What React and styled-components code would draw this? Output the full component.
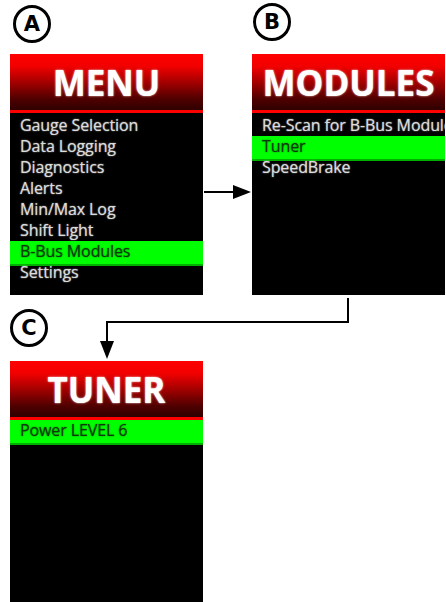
import React from "react";
import styled, { createGlobalStyle } from "styled-components";

const Global = createGlobalStyle`
  html, body { margin: 0; padding: 0; background: #ffffff; }
  body { width: 446px; height: 602px; overflow: hidden; }
`;

const Page = styled.div`
  display: grid;
  grid-template-columns: 193px 49px 193px;
  grid-template-rows: 54px 241px 66px 241px;
  padding-left: 10px;
  width: 446px;
  height: 602px;
  box-sizing: border-box;
`;

const Badge = styled.div`
  width: 38px;
  height: 38px;
  box-sizing: border-box;
  border: 3px solid #000;
  border-radius: 50%;
  display: flex;
  align-items: center;
  justify-content: center;
  font-family: "DejaVu Sans", sans-serif;
  font-weight: 700;
  font-size: 21px;
  color: #000;
  margin-top: ${(p) => p.$top}px;
  margin-left: ${(p) => p.$left}px;
`;

const Screen = styled.div`
  background: #000;
  display: flex;
  flex-direction: column;
  overflow: hidden;
  width: 193px;
  height: 241px;
`;

const Header = styled.div`
  height: 56px;
  border-bottom: 3px solid #ff0000;
  background: linear-gradient(
    to bottom,
    #ff0000 0%,
    #f20000 22%,
    #a00000 52%,
    #500000 80%,
    #300000 100%
  );
  display: flex;
  align-items: center;
  justify-content: center;
  flex-shrink: 0;
`;

const Title = styled.div`
  font-family: "Open Sans", sans-serif;
  font-weight: 700;
  font-size: 35px;
  line-height: 1;
  color: #ffffff;
  white-space: nowrap;
  text-shadow: 0 0 1.5px rgba(255, 255, 255, 0.9), 0 0 3px rgba(255, 255, 255, 0.3);
  padding-top: 1px;
`;

const List = styled.div`
  display: flex;
  flex-direction: column;
  padding-top: ${(p) => p.$pad}px;
`;

const Row = styled.div`
  height: 21px;
  line-height: 21px;
  padding: 0 0 0 10px;
  font-family: "Open Sans", sans-serif;
  font-size: 16px;
  letter-spacing: -0.1px;
  white-space: nowrap;
  color: ${(p) => (p.$active ? "#0d3a0d" : "#dcdcdc")};
  text-shadow: ${(p) =>
    p.$active ? "0 0 1.5px rgba(0,60,0,0.8)" : "0 0 1.5px rgba(255,255,255,0.7)"};
  background: ${(p) => (p.$active ? "#00ff00" : "transparent")};
  border-bottom: ${(p) => (p.$active ? "2px solid #00b000" : "none")};
  padding-bottom: ${(p) => (p.$active ? 2 : 0)}px;
  margin-bottom: ${(p) => (p.$active ? -4 : 0)}px;
`;

const SideArrow = styled.svg`
  margin-top: 130px;
  margin-left: 1px;
  display: block;
`;

const Connector = styled.div`
  grid-column: 1 / 4;
  display: flex;
  align-items: flex-start;
`;

const ConnectorSvg = styled.svg`
  display: block;
  margin-left: 52px;
`;

const Cell = styled.div`
  grid-column: ${(p) => p.$col};
`;

function Panel({ title, items, active, pad = 2 }) {
  return (
    <Screen>
      <Header>
        <Title>{title}</Title>
      </Header>
      <List $pad={pad}>
        {items.map((t) => (
          <Row key={t} $active={t === active}>
            {t}
          </Row>
        ))}
      </List>
    </Screen>
  );
}

export default function App() {
  return (
    <>
      <Global />
      <Page>
        <Cell $col={1}>
          <Badge $top={5} $left={3}>A</Badge>
        </Cell>
        <Cell $col={2} />
        <Cell $col={3}>
          <Badge $top={3} $left={1}>B</Badge>
        </Cell>

        <Cell $col={1}>
          <Panel
            title="MENU"
            active="B-Bus Modules"
            items={[
              "Gauge Selection",
              "Data Logging",
              "Diagnostics",
              "Alerts",
              "Min/Max Log",
              "Shift Light",
              "B-Bus Modules",
              "Settings",
            ]}
          />
        </Cell>
        <Cell $col={2}>
          <SideArrow width="47" height="16" viewBox="0 0 47 16">
            <line x1="0" y1="8" x2="30" y2="8" stroke="#000" strokeWidth="2" />
            <polygon points="29,1 47,8 29,15" fill="#000" />
          </SideArrow>
        </Cell>
        <Cell $col={3}>
          <Panel
            title="MODULES"
            active="Tuner"
            items={["Re-Scan for B-Bus Modules", "Tuner", "SpeedBrake"]}
          />
        </Cell>

        <Connector>
          <Badge $top={14} $left={0}>C</Badge>
          <ConnectorSvg width="256" height="66" viewBox="0 0 256 66">
            <polyline
              points="248,3 248,27 7,27 7,48"
              fill="none"
              stroke="#000"
              strokeWidth="2"
            />
            <polygon points="0,46 14,46 7,64" fill="#000" />
          </ConnectorSvg>
        </Connector>

        <Cell $col={1}>
          <Panel title="TUNER" active="Power LEVEL 6" items={["Power LEVEL 6"]} pad={0} />
        </Cell>
      </Page>
    </>
  );
}
